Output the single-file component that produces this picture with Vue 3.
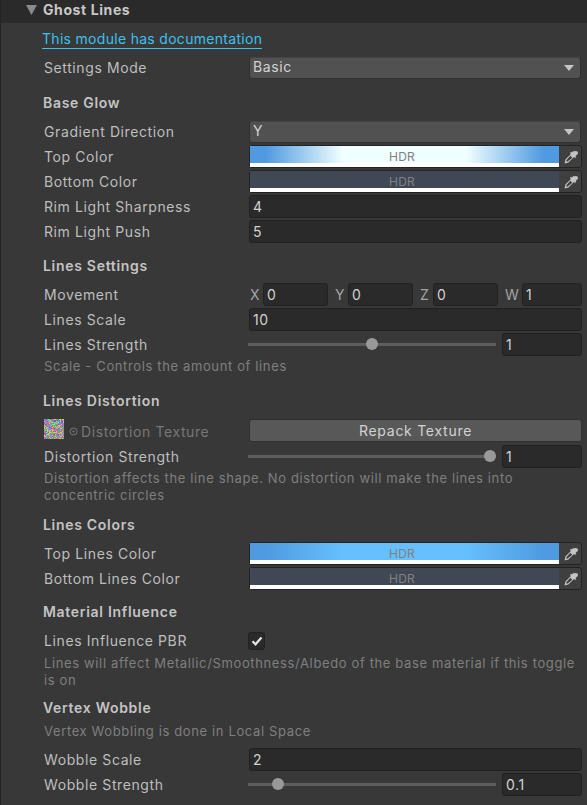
<script setup>
// seeded noise for the texture thumbnail
let seed = 7
const rand = () => {
  seed = (seed * 16807) % 2147483647
  return seed / 2147483647
}
const noiseColors = ['#e050b0', '#48c080', '#6c58f0', '#f0c040', '#40c0e0', '#b0e048', '#e86060', '#9080e0']
const noise = []
for (let y = 0; y < 20; y++) {
  for (let x = 0; x < 20; x++) {
    noise.push({ x, y, fill: noiseColors[Math.floor(rand() * noiseColors.length)] })
  }
}
const vec = [
  { axis: 'X', value: '0' },
  { axis: 'Y', value: '0' },
  { axis: 'Z', value: '0' },
  { axis: 'W', value: '1' },
]
const dropperPath =
  'M9.6.6 8 2.4 7.1 1.7 5.9 3l1 1-5.500 5.600L.6 13.400l3.800-.8L10 7.100l1 1 1.300-1.200-.8-.9 1.800-1.600c.9-.9.9-2.100.1-2.900-.8-.8-2.400-.8-3.800-.1zM6.300 5.700l2 2-4.600 3.900H2.400V10.300z'
const thumbLeft = (v) => `calc((100% - 12px) * ${v})`
</script>

<template>
  <div class="panel">
    <header class="head">
      <svg class="fold" width="11" height="10" viewBox="0 0 11 10"><path d="M0 0h11L5.500 10z" fill="#8a8a8a" /></svg>
      <span>Ghost Lines</span>
    </header>

    <div class="body">
      <a class="doc-link">This module has documentation</a>

      <div class="row first">
        <label>Settings Mode</label>
        <div class="select"><span>Basic</span><i class="caret"></i></div>
      </div>

      <h4 class="title glow">Base Glow</h4>
      <div class="row">
        <label>Gradient Direction</label>
        <div class="select"><span>Y</span><i class="caret"></i></div>
      </div>
      <div class="row">
        <label>Top Color</label>
        <div class="color">
          <div class="swatch grad-white"><span class="hdr">HDR</span></div>
          <svg class="dropper" width="14" height="14" viewBox="0 0 14 14"><path :d="dropperPath" fill="#c4c4c4" fill-rule="evenodd" /></svg>
        </div>
      </div>
      <div class="row">
        <label>Bottom Color</label>
        <div class="color">
          <div class="swatch slate"><span class="hdr">HDR</span></div>
          <svg class="dropper" width="14" height="14" viewBox="0 0 14 14"><path :d="dropperPath" fill="#c4c4c4" fill-rule="evenodd" /></svg>
        </div>
      </div>
      <div class="row">
        <label>Rim Light Sharpness</label>
        <div class="input">4</div>
      </div>
      <div class="row">
        <label>Rim Light Push</label>
        <div class="input">5</div>
      </div>

      <h4 class="title settings">Lines Settings</h4>
      <div class="row">
        <label>Movement</label>
        <div class="vec">
          <div v-for="c in vec" :key="c.axis" class="vec-item" :class="{ wide: c.axis === 'W' }">
            <span class="axis">{{ c.axis }}</span>
            <div class="input">{{ c.value }}</div>
          </div>
        </div>
      </div>
      <div class="row">
        <label>Lines Scale</label>
        <div class="input">10</div>
      </div>
      <div class="row">
        <label>Lines Strength</label>
        <div class="slider">
          <div class="track"><i class="thumb" :style="{ left: thumbLeft(0.5) }"></i></div>
          <div class="input num">1</div>
        </div>
      </div>
      <p class="help">Scale - Controls the amount of lines</p>

      <h4 class="title distortion">Lines Distortion</h4>
      <div class="row tex">
        <div class="tex-label">
          <svg class="noise" width="20" height="20" viewBox="0 0 20 20" shape-rendering="crispEdges">
            <rect v-for="n in noise" :key="n.x + '-' + n.y" :x="n.x" :y="n.y" width="1" height="1" :fill="n.fill" />
          </svg>
          <svg class="picker" width="9" height="9" viewBox="0 0 9 9"><circle cx="4.500" cy="4.500" r="3.500" fill="none" stroke="#777" /><circle cx="4.500" cy="4.500" r="1.100" fill="#777" /></svg>
          <span>Distortion Texture</span>
        </div>
        <button class="repack">Repack Texture</button>
      </div>
      <div class="row">
        <label>Distortion Strength</label>
        <div class="slider">
          <div class="track"><i class="thumb" :style="{ left: thumbLeft(1) }"></i></div>
          <div class="input num">1</div>
        </div>
      </div>
      <p class="help">Distortion affects the line shape. No distortion will make the lines into concentric circles</p>

      <h4 class="title colors">Lines Colors</h4>
      <div class="row">
        <label>Top Lines Color</label>
        <div class="color">
          <div class="swatch grad-blue"><span class="hdr">HDR</span></div>
          <svg class="dropper" width="14" height="14" viewBox="0 0 14 14"><path :d="dropperPath" fill="#c4c4c4" fill-rule="evenodd" /></svg>
        </div>
      </div>
      <div class="row">
        <label>Bottom Lines Color</label>
        <div class="color">
          <div class="swatch slate"><span class="hdr">HDR</span></div>
          <svg class="dropper" width="14" height="14" viewBox="0 0 14 14"><path :d="dropperPath" fill="#c4c4c4" fill-rule="evenodd" /></svg>
        </div>
      </div>

      <h4 class="title material">Material Influence</h4>
      <div class="row">
        <label>Lines Influence PBR</label>
        <div class="check">
          <svg width="12" height="10" viewBox="0 0 12 10"><path d="M1.500 5.300 4.500 8.300 10.500 1.500" fill="none" stroke="#e4e4e4" stroke-width="2.200" /></svg>
        </div>
      </div>
      <p class="help pbr">Lines will affect Metallic/Smoothness/Albedo of the base material if this toggle is on</p>

      <h4 class="title wobble">Vertex Wobble</h4>
      <p class="help wobble-help">Vertex Wobbling is done in Local Space</p>
      <div class="row">
        <label>Wobble Scale</label>
        <div class="input">2</div>
      </div>
      <div class="row">
        <label>Wobble Strength</label>
        <div class="slider">
          <div class="track"><i class="thumb" :style="{ left: thumbLeft(0.1) }"></i></div>
          <div class="input num">0.1</div>
        </div>
      </div>
    </div>
  </div>
</template>

<style scoped>
.panel {
  width: 587px;
  height: 805px;
  overflow: hidden;
  box-sizing: border-box;
  background: #383838;
  border-left: 1px solid #232323;
  color: #bebebe;
  font-family: Inter, "Noto Sans", sans-serif;
  font-size: 14px;
  letter-spacing: 0.6px;
}
.head {
  height: 23px;
  box-sizing: border-box;
  padding: 0 0 4px 25px;
  background: #2a2a2a;
  display: flex;
  align-items: center;
  font-weight: 700;
  color: #c8c8c8;
}
.fold {
  margin-right: 6px;
}
.body {
  padding: 0 5px 0 43px;
}
.doc-link {
  display: block;
  width: max-content;
  margin: 7px 0 0 -2px;
  height: 18px;
  line-height: 18px;
  letter-spacing: 0.3px;
  color: #3cc0ee;
  border-bottom: 1px solid #3cc0ee;
}
.row {
  display: flex;
  align-items: center;
  height: 23px;
  margin-top: 2px;
}
.row.first {
  margin-top: 7px;
}
.row label {
  width: 205px;
  flex: none;
}
.select,
.input,
.color,
.vec,
.slider,
.repack {
  flex: 1;
  min-width: 0;
  box-sizing: border-box;
  height: 23px;
}
.select {
  height: 22px;
  margin-right: 1px;
  background: #515151;
  border: 1px solid #303030;
  border-top-color: #454545;
  border-radius: 3px;
  display: flex;
  align-items: center;
  justify-content: space-between;
  padding: 0 6px 2px 3px;
  color: #d2d2d2;
}
.caret {
  width: 0;
  height: 0;
  border-left: 5px solid transparent;
  border-right: 5px solid transparent;
  border-top: 6px solid #c4c4c4;
  margin-top: 3px;
}
.input {
  background: #2a2a2a;
  border: 1px solid #212121;
  border-radius: 3px;
  padding-left: 3px;
  line-height: 21px;
  color: #d2d2d2;
}
.color {
  display: flex;
  align-items: center;
  background: #3f3f3f;
  border: 1px solid #232323;
  border-radius: 3px;
}
.swatch {
  position: relative;
  width: 309px;
  height: 21px;
  flex: none;
  box-sizing: border-box;
  border-bottom: 4px solid #fff;
  text-align: center;
}
.hdr {
  position: absolute;
  left: -5px;
  right: 0;
  top: 3px;
  font-size: 12px;
  line-height: 16px;
  letter-spacing: 0.2px;
  color: #808080;
}
.grad-white {
  background: linear-gradient(90deg, #4f9ae0 5%, #f0ffff 30%, #f0ffff 70%, #4f9ae0 95%);
}
.grad-blue {
  background: linear-gradient(90deg, #4f9ae0 5%, #66bfff 30%, #66bfff 70%, #4f9ae0 95%);
}
.slate {
  background: #404855;
}
.dropper {
  margin-left: 5px;
}
.vec {
  display: flex;
  gap: 6px;
}
.vec-item {
  display: flex;
  width: 79px;
  flex: none;
  line-height: 23px;
}
.vec-item.wide {
  width: 78px;
}
.axis {
  width: 14px;
  flex: none;
  padding-left: 1px;
  box-sizing: border-box;
  color: #a4a4a4;
}
.vec-item.wide .axis {
  width: 18px;
}
.slider {
  display: flex;
  align-items: center;
  gap: 6px;
  margin-left: -1px;
}
.track {
  position: relative;
  flex: 1;
  height: 3px;
  background: #5e5e5e;
}
.thumb {
  position: absolute;
  top: -5px;
  width: 12px;
  height: 12px;
  border-radius: 50%;
  background: #999;
}
.input.num {
  flex: none;
  width: 80px;
}
.help {
  margin: 2px 0 0;
  font-size: 13px;
  line-height: 17px;
  letter-spacing: 0.63px;
  color: #7f7f7f;
}
.help.pbr {
  margin-top: 3px;
}
.title {
  margin: 0 0 0 -1px;
  font-size: 14px;
  font-weight: 600;
  line-height: 18px;
  letter-spacing: 0.7px;
  color: #c4c4c4;
}
.title.glow { margin-top: 15px; }
.title.settings { margin-top: 14px; }
.title.distortion { margin-top: 17px; }
.title.colors { margin-top: 12px; }
.title.material { margin-top: 13px; }
.title.wobble { margin-top: 10px; }
.title + .row { margin-top: 8px; }
.row.tex {
  margin-top: 9px;
  height: 24px;
  align-items: flex-start;
}
.tex-label {
  width: 205px;
  flex: none;
  display: flex;
  align-items: center;
  height: 24px;
  color: #777;
}
.noise {
  flex: none;
  align-self: flex-start;
}
.picker {
  margin: 0 3px 0 5px;
}
.repack {
  background: #585858;
  border: 1px solid #303030;
  border-radius: 3px;
  padding: 0;
  color: #d2d2d2;
  font: inherit;
  letter-spacing: 0.73px;
}
.check {
  width: 17px;
  height: 18px;
  margin-left: -1px;
  box-sizing: border-box;
  background: #2a2a2a;
  border: 1px solid #212121;
  border-radius: 3px;
  display: flex;
  align-items: center;
  justify-content: center;
}
.help.wobble-help {
  margin-top: 6px;
}
.wobble-help + .row {
  margin-top: 8px;
}
</style>
